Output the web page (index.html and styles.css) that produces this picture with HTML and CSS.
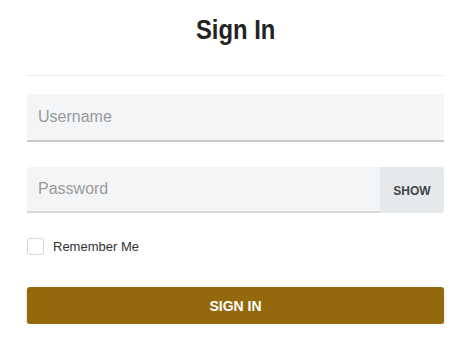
FILE: index.html
```html
<!DOCTYPE html>
<html lang="en">
<head>
<meta charset="utf-8">
<title>Sign In</title>
<link rel="stylesheet" href="styles.css">
</head>
<body>
<main class="page">
  <h1 class="title"><span class="title-text">Sign In</span></h1>
  <div class="divider"></div>
  <form class="form">
    <div class="field">
      <input class="input" type="text" placeholder="Username">
    </div>
    <div class="field field-password">
      <input class="input input-password" type="password" placeholder="Password">
      <button type="button" class="show-btn">SHOW</button>
    </div>
    <label class="remember">
      <span class="checkbox"></span>
      <span class="remember-text">Remember Me</span>
    </label>
    <button type="button" class="submit">SIGN IN</button>
  </form>
</main>
</body>
</html>
```
FILE: styles.css
```css
* { box-sizing: border-box; }
html, body { margin: 0; padding: 0; background: #fff; }
body { font-family: "Liberation Sans", Arial, sans-serif; color: #333; }
.page { padding: 12px 30px 0 27px; }
.title {
  margin: 0;
  font-family: "Liberation Sans", Arial, sans-serif;
  font-weight: 700;
  font-size: 28px;
  line-height: 36px;
  text-align: center;
  color: #232323;
}
.title-text { display: inline-block; transform: scaleX(0.85); }
.divider { margin-top: 27px; height: 1px; background: #ececec; }
.form { display: flex; flex-direction: column; padding-top: 18px; }
.field { display: flex; height: 48px; }
.field-password { margin-top: 25px; height: 46px; }
.input {
  flex: 1;
  min-width: 0;
  border: 0;
  border-bottom: 2px solid #c9c9c9;
  border-radius: 3px 3px 0 0;
  background: #f3f5f7;
  padding: 0 11px;
  font-family: "Liberation Sans", Arial, sans-serif;
  font-size: 16px;
  color: #333;
  outline: none;
}
.input::placeholder { color: #9a9a9a; }
.input-password { border-bottom: 2px solid #d6d9dc; border-radius: 3px 0 0 0; }
.show-btn {
  width: 64px;
  border: 0;
  border-radius: 0 3px 3px 0;
  background: #e6e9ec;
  font-family: "Liberation Sans", Arial, sans-serif;
  font-weight: 700;
  font-size: 12px;
  color: #444;
  padding: 2px 0 0;
}
.remember { display: flex; align-items: center; gap: 9px; margin-top: 25px; height: 17px; }
.checkbox {
  width: 17px; height: 17px;
  border: 1px solid #d4d4d4;
  border-radius: 3px;
  background: #fff;
}
.remember-text { font-size: 13px; color: #333; }
.submit {
  margin-top: 32px;
  height: 37px;
  border: 0;
  border-radius: 3px;
  background: #94690b;
  color: #fff;
  font-family: "Liberation Sans", Arial, sans-serif;
  font-weight: 700;
  font-size: 14px;
  box-shadow: 0 2px 3px rgba(0,0,0,0.22);
}
```
